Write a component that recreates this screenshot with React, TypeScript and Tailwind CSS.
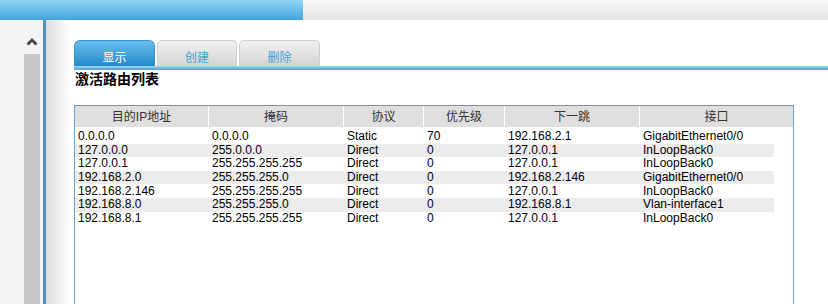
const rows = [
  ['0.0.0.0', '0.0.0.0', 'Static', '70', '192.168.2.1', 'GigabitEthernet0/0'],
  ['127.0.0.0', '255.0.0.0', 'Direct', '0', '127.0.0.1', 'InLoopBack0'],
  ['127.0.0.1', '255.255.255.255', 'Direct', '0', '127.0.0.1', 'InLoopBack0'],
  ['192.168.2.0', '255.255.255.0', 'Direct', '0', '192.168.2.146', 'GigabitEthernet0/0'],
  ['192.168.2.146', '255.255.255.255', 'Direct', '0', '127.0.0.1', 'InLoopBack0'],
  ['192.168.8.0', '255.255.255.0', 'Direct', '0', '192.168.8.1', 'Vlan-interface1'],
  ['192.168.8.1', '255.255.255.255', 'Direct', '0', '127.0.0.1', 'InLoopBack0'],
]

const headers = ['目的IP地址', '掩码', '协议', '优先级', '下一跳', '接口']
const widths = ['w-[134px]', 'w-[135px]', 'w-[80px]', 'w-[81px]', 'w-[135px]', 'flex-1']

const font = { fontFamily: '"Liberation Sans", Arial, "Noto Sans CJK SC", sans-serif' }

export default function App() {
  return (
    <div className="w-[828px] h-[304px] overflow-hidden bg-white flex flex-col" style={font}>
      {/* top bar */}
      <div className="h-[20px] flex shrink-0">
        <div className="w-[303px] bg-gradient-to-b from-[#8fd7f6] to-[#3fa5dd]" />
        <div className="flex-1 bg-gradient-to-b from-[#fafafa] to-[#e3e3e3]" />
      </div>

      <div className="flex flex-1 min-h-0">
        {/* left side */}
        <div className="w-[24px] bg-[#f4f4f4]" />
        <div className="w-[16px] bg-[#f4f4f4] flex flex-col">
          <div className="h-[34px] flex justify-center pt-[17px]">
            <svg width="12" height="9" viewBox="0 0 12 9">
              <path d="M1.5 7.5 L6 3 L10.5 7.5" fill="none" stroke="#444" strokeWidth="2.8" />
            </svg>
          </div>
          <div className="flex-1 bg-[#c9c9c9]" />
        </div>
        <div className="w-[3px] bg-[#f4f4f4]" />
        <div className="w-[3px] bg-[#5a8fba]" />
        <div className="w-[24px] bg-gradient-to-r from-[#dedede] to-white" />

        {/* content */}
        <div className="flex-1 pl-[4px] pt-[20px] flex flex-col">
          <div className="flex items-end h-[26px] gap-[2px]">
            <div className="w-[81px] h-[26px] rounded-t-[6px] border border-b-0 border-[#3a94cc] bg-gradient-to-b from-[#68c0ee] to-[#2288c8] flex items-center justify-center text-white text-[12px] pt-[8px]">
              显示
            </div>
            <div className="w-[80px] h-[26px] rounded-t-[5px] border border-b-0 border-[#cfcfcf] bg-gradient-to-b from-[#f2f2f2] to-[#d4d4d4] flex items-center justify-center text-[#3f9fd6] text-[12px] pt-[8px]">
              创建
            </div>
            <div className="w-[81px] h-[26px] rounded-t-[5px] border border-b-0 border-[#cfcfcf] bg-gradient-to-b from-[#f2f2f2] to-[#d4d4d4] flex items-center justify-center text-[#3f9fd6] text-[12px] pt-[8px]">
              删除
            </div>
          </div>
          <div className="h-[4px] bg-gradient-to-b from-[#a2d8f0] to-[#4c9dcb]" />
          <div className="h-[16px] leading-[16px] text-[14px] font-bold text-black pl-[1px]" style={{ fontFamily: '"Noto Sans CJK SC", sans-serif' }}>
            激活路由列表
          </div>

          {/* table */}
          <div className="mt-[19px] w-[720px] flex-1 border-l border-r border-[#6aa6cf] flex flex-col">
            <div className="h-[23px] flex border-t border-t-[#8c8c9c] border-b border-b-white bg-[#dfdfdf] text-[12px] text-[#333]">
              {headers.map((h, i) => (
                <div key={h} className={`${widths[i]} flex items-center justify-center ${i < 5 ? 'border-r border-white' : ''}`}>
                  {h}
                </div>
              ))}
            </div>
            <div className="pt-[2px] pr-[19px]">
              {rows.map((r, ri) => (
                <div key={ri} className={`h-[13.6px] flex items-center text-[12px] text-black ${ri % 2 === 1 ? 'bg-[#ececec]' : ''}`}>
                  {r.map((c, ci) => (
                    <div key={ci} className={`${widths[ci]} pl-[3px] leading-[13px] whitespace-nowrap`}>
                      {c}
                    </div>
                  ))}
                </div>
              ))}
            </div>
          </div>
        </div>
      </div>
    </div>
  )
}
